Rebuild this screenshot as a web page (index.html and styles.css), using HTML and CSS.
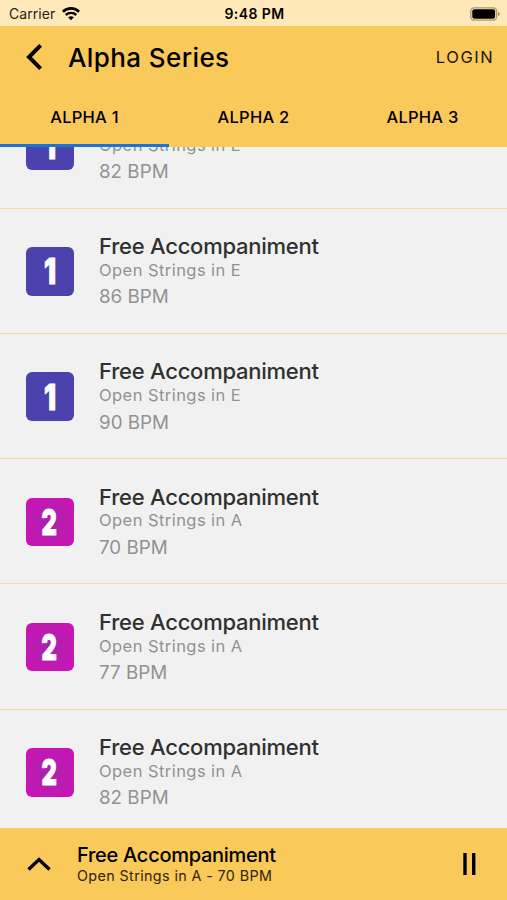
FILE: index.html
```
<!DOCTYPE html>
<html lang="en">
<head>
  <meta charset="UTF-8">
  <title>Alpha Series</title>
  <link rel="stylesheet" href="styles.css">
</head>
<body>
  <div class="status">
    <div class="network">
      <span class="carrier">Carrier</span>
      <svg class="wifi" width="18" height="14" viewBox="0 0 18 14" fill="none" stroke="#000">
        <path d="M.9 4.700C5.500.3 12.500.3 17.100 4.700" stroke-width="2.600"/>
        <path d="M3.700 8C6.700 5.200 11.300 5.200 14.300 8" stroke-width="2.400"/>
        <path d="M6.200 10.300C8 8.900 10 8.900 11.800 10.300L9 13.200Z" fill="#000" stroke="none"/>
      </svg>
    </div>
    <span class="clock">9:48 PM</span>
    <svg class="battery" width="30" height="14" viewBox="0 0 30 14">
      <rect x=".8" y=".8" width="25.800" height="12.400" rx="3.500" fill="none" stroke="#000" stroke-opacity=".35" stroke-width="1.300"/>
      <rect x="2.300" y="2.300" width="22.800" height="9.400" rx="2"/>
      <path d="M28 5V9Q29.800 8.500 29.800 7T28 5Z" fill-opacity=".4"/>
    </svg>
  </div>

  <header class="header">
    <div class="toolbar">
      <svg class="back" width="18" height="28" viewBox="0 0 18 28" fill="none" stroke="#000" stroke-width="4">
        <path d="M15.600 2.400L4 14L15.600 25.600"/>
      </svg>
      <h1 class="title">Alpha Series</h1>
      <span class="login">LOGIN</span>
    </div>
    <nav class="tabs">
      <span class="tab active">ALPHA 1</span>
      <span class="tab">ALPHA 2</span>
      <span class="tab">ALPHA 3</span>
    </nav>
  </header>

  <main class="list">
    <div class="row">
      <div class="tile one"><span>1</span></div>
      <div class="info">
        <div class="name">Free Accompaniment</div>
        <div class="sub">Open Strings in E</div>
        <div class="bpm">82 BPM</div>
      </div>
    </div>
    <div class="row">
      <div class="tile one"><span>1</span></div>
      <div class="info">
        <div class="name">Free Accompaniment</div>
        <div class="sub">Open Strings in E</div>
        <div class="bpm">86 BPM</div>
      </div>
    </div>
    <div class="row">
      <div class="tile one"><span>1</span></div>
      <div class="info">
        <div class="name">Free Accompaniment</div>
        <div class="sub">Open Strings in E</div>
        <div class="bpm">90 BPM</div>
      </div>
    </div>
    <div class="row">
      <div class="tile two"><span>2</span></div>
      <div class="info">
        <div class="name">Free Accompaniment</div>
        <div class="sub">Open Strings in A</div>
        <div class="bpm">70 BPM</div>
      </div>
    </div>
    <div class="row">
      <div class="tile two"><span>2</span></div>
      <div class="info">
        <div class="name">Free Accompaniment</div>
        <div class="sub">Open Strings in A</div>
        <div class="bpm">77 BPM</div>
      </div>
    </div>
    <div class="row">
      <div class="tile two"><span>2</span></div>
      <div class="info">
        <div class="name">Free Accompaniment</div>
        <div class="sub">Open Strings in A</div>
        <div class="bpm">82 BPM</div>
      </div>
    </div>
  </main>

  <footer class="player">
    <svg class="expand" width="24" height="15" viewBox="0 0 24 15" fill="none" stroke="#000" stroke-width="3.400">
      <path d="M1.500 12.600L12 2.600L22.500 12.600"/>
    </svg>
    <div class="playing">
      <div class="track">Free Accompaniment</div>
      <div class="detail">Open Strings in A - 70 BPM</div>
    </div>
    <svg class="pause" width="13" height="22" viewBox="0 0 13 22">
      <rect x=".3" width="3.400" height="22" rx=".5"/>
      <rect x="9" width="3.400" height="22" rx=".5"/>
    </svg>
  </footer>
</body>
</html>
```
FILE: styles.css
```
* { box-sizing: border-box; }
body { margin: 0; height: 900px; display: flex; flex-direction: column; overflow: hidden; background: #f1f1f1; color: #000; font-family: Inter, "Liberation Sans", sans-serif; white-space: nowrap; }

.status { height: 25.500px; flex: none; display: grid; grid-template-columns: 1fr auto 1fr; align-items: center; padding: 2px 7px 0 9px; background: #ffe9b8; font-size: 14px; line-height: 20px; }
.network { display: flex; align-items: center; gap: 6.500px; }
.carrier { color: #222; letter-spacing: 0.05px; }
.wifi { display: block; }
.clock { font-size: 14px; font-weight: 600; letter-spacing: 0.4px; }
.battery { justify-self: end; display: block; }

.header { height: 121.500px; flex: none; background: #f9c95a; }
.toolbar { height: 63px; display: flex; align-items: center; padding: 0 12px 0 25px; }
.back { margin-right: 25px; }
.title { margin: 0; font-size: 26px; font-weight: 500; letter-spacing: 0.4px; }
.login { margin-left: auto; margin-right: 0.6px; font-size: 16.500px; letter-spacing: 1.6px; color: #1c1606; }
.tabs { height: 58.500px; display: grid; grid-template-columns: repeat(3, 1fr); }
.tab { display: flex; align-items: center; justify-content: center; padding-top: 2px; font-size: 16.500px; line-height: 20px; font-weight: 500; letter-spacing: 0.25px; border-bottom: 3px solid transparent; }
.tab.active { border-color: #1b75d6; }

.list { flex: 1; min-height: 0; overflow: hidden; }
.row { height: 125.250px; display: flex; align-items: flex-start; padding: 38.500px 25.500px 0; border-bottom: 1px solid #f5dc9c; }
.row:first-child { margin-top: -63.750px; }
.tile { width: 48.500px; height: 48.500px; margin-right: 25px; display: flex; align-items: center; justify-content: center; border-radius: 6px; color: #fff; font-size: 35px; font-weight: 900; line-height: 48px; -webkit-text-stroke: 0.9px #fff; }
.tile span { transform: scaleX(0.68); }
.one { background: #4b42ad; }
.one span { transform: scaleX(0.76); }
.two { background: radial-gradient(circle, #ad20ad 15%, #c01ab2 60%, #d00fb8 100%); }
.name { margin-top: -13.900px; font-size: 22px; line-height: 26px; font-weight: 500; letter-spacing: -0.24px; color: #303030; }
.sub { margin-top: 0.7px; font-size: 16.500px; line-height: 21px; letter-spacing: 0.44px; color: #929292; }
.bpm { margin-top: 2.500px; font-size: 18.800px; line-height: 28px; color: #929292; }

.player { height: 72px; flex: none; display: flex; align-items: center; padding: 0 31px 0 27px; background: #f9c95a; }
.playing { margin-left: 26px; }
.track { font-size: 20px; line-height: 24px; font-weight: 500; letter-spacing: -0.27px; }
.detail { font-size: 14.300px; line-height: 18px; letter-spacing: 0.4px; color: #2e250c; }
.pause { margin-left: auto; }
```
